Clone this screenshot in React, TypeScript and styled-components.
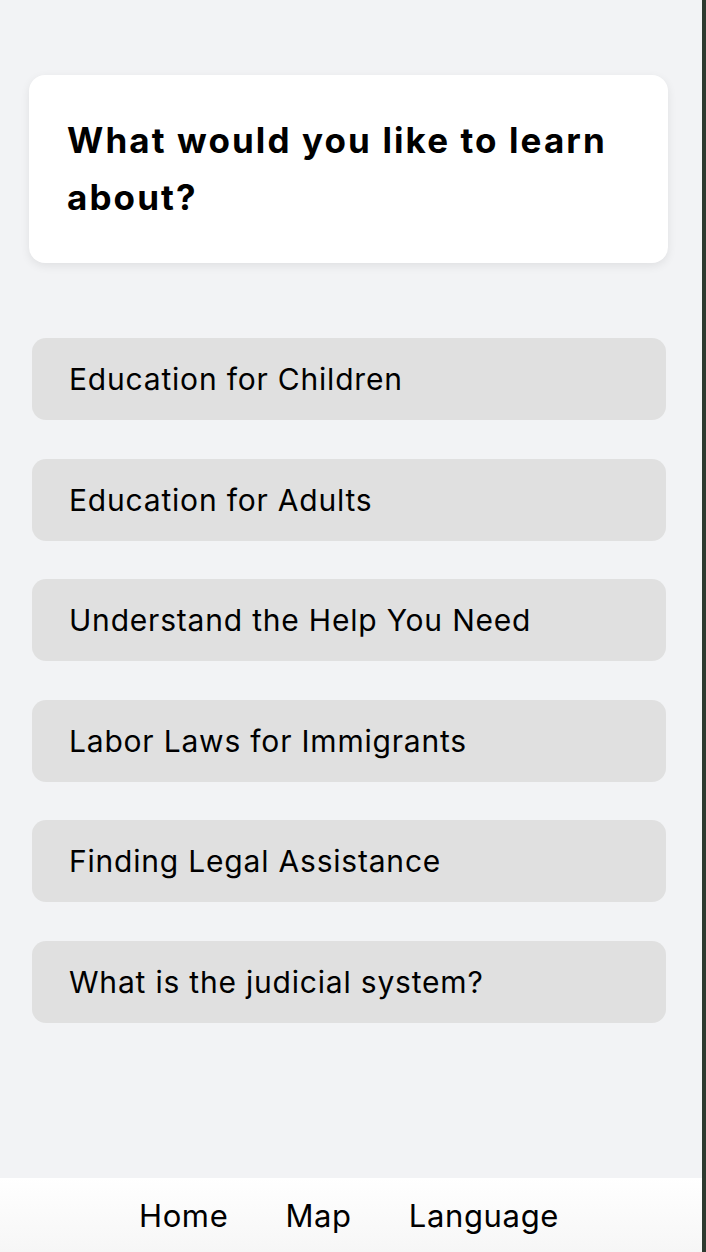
import React from "react";
import styled, { createGlobalStyle } from "styled-components";

const Global = createGlobalStyle`
  html, body { margin: 0; padding: 0; }
  body { background: #2e3a2f; font-family: "Inter", "Noto Sans", sans-serif; }
  * { box-sizing: border-box; }
`;

const Screen = styled.div`
  width: 702px;
  min-height: 1252px;
  background: #f2f3f5;
  display: flex;
  flex-direction: column;
`;

const Main = styled.main`
  flex: 1;
  padding: 75px 34px 0 29px;
  display: flex;
  flex-direction: column;
`;

const Card = styled.section`
  background: #ffffff;
  border-radius: 16px;
  padding: 37px 26px 37px 38px;
  box-shadow: 0 3px 10px rgba(0, 0, 0, 0.08);
`;

const Title = styled.h1`
  margin: 0;
  font-family: "Inter", sans-serif;
  font-weight: 700;
  font-size: 35px;
  line-height: 57px;
  color: #000;
  letter-spacing: 2.1px;
`;

const List = styled.nav`
  margin-top: 75px;
  padding: 0 2px 0 3px;
  display: flex;
  flex-direction: column;
  gap: 38.5px;
`;

const Topic = styled.button`
  height: 82px;
  border: none;
  border-radius: 14px;
  background: #e0e0e0;
  padding: 0 37px;
  text-align: left;
  font-family: "Inter", sans-serif;
  font-size: 30px;
  font-weight: 400;
  letter-spacing: 0.8px;
  color: #000;
  cursor: pointer;
`;

const Footer = styled.footer`
  height: 74px;
  background: linear-gradient(#ffffff, #f6f6f6);
  display: flex;
  justify-content: center;
  align-items: center;
  gap: 57px;
  padding-right: 4px;
`;

const FootLink = styled.a`
  font-family: "Inter", sans-serif;
  font-size: 31px;
  letter-spacing: 0.65px;
  color: #000;
  text-decoration: none;
`;

const topics = [
  "Education for Children",
  "Education for Adults",
  "Understand the Help You Need",
  "Labor Laws for Immigrants",
  "Finding Legal Assistance",
  "What is the judicial system?",
];

export default function App() {
  return (
    <>
      <Global />
      <Screen>
        <Main>
          <Card>
            <Title>What would you like to learn about?</Title>
          </Card>
          <List>
            {topics.map((t) => (
              <Topic key={t}>{t}</Topic>
            ))}
          </List>
        </Main>
        <Footer>
          <FootLink>Home</FootLink>
          <FootLink>Map</FootLink>
          <FootLink>Language</FootLink>
        </Footer>
      </Screen>
    </>
  );
}
